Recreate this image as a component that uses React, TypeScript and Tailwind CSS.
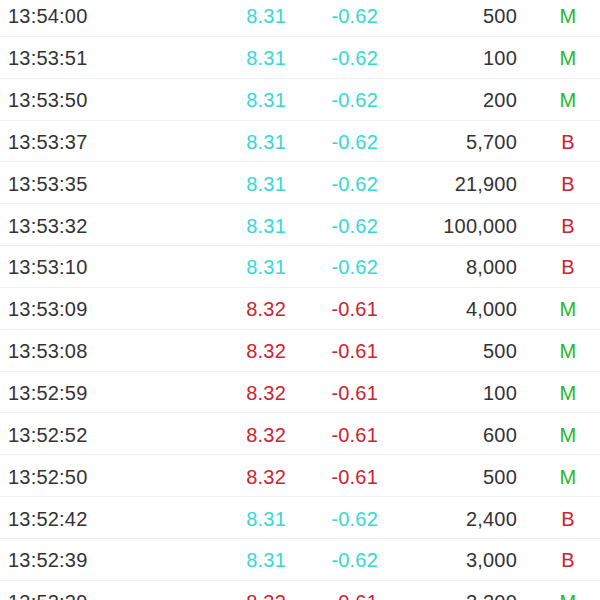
import React from "react";

type Row = { t: string; up: boolean; v: string; f: "M" | "B" };

const rows: Row[] = [
  { t: "13:54:00", up: false, v: "500", f: "M" },
  { t: "13:53:51", up: false, v: "100", f: "M" },
  { t: "13:53:50", up: false, v: "200", f: "M" },
  { t: "13:53:37", up: false, v: "5,700", f: "B" },
  { t: "13:53:35", up: false, v: "21,900", f: "B" },
  { t: "13:53:32", up: false, v: "100,000", f: "B" },
  { t: "13:53:10", up: false, v: "8,000", f: "B" },
  { t: "13:53:09", up: true, v: "4,000", f: "M" },
  { t: "13:53:08", up: true, v: "500", f: "M" },
  { t: "13:52:59", up: true, v: "100", f: "M" },
  { t: "13:52:52", up: true, v: "600", f: "M" },
  { t: "13:52:50", up: true, v: "500", f: "M" },
  { t: "13:52:42", up: false, v: "2,400", f: "B" },
  { t: "13:52:39", up: false, v: "3,000", f: "B" },
  { t: "13:52:29", up: true, v: "2,200", f: "M" },
];

export default function App() {
  return (
    <div
      className="w-[600px] h-[600px] overflow-hidden bg-white"
      style={{ fontFamily: '"Liberation Sans", Arial, sans-serif' }}
    >
      <div className="-mt-[5px]">
        {rows.map((r, i) => {
          const c = r.up ? "text-[#d0212f]" : "text-[#34d9d6]";
          return (
            <div
              key={i}
              className="flex items-center h-[41.85px] border-b border-[#f0f0f0] pl-[8px] pt-[2px] text-[20px] tracking-[0.2px] text-[#333333]"
            >
              <div className="w-[200px]">{r.t}</div>
              <div className={`w-[78px] text-right ${c}`}>{r.up ? "8.32" : "8.31"}</div>
              <div className={`w-[92px] text-right ${c}`}>{r.up ? "-0.61" : "-0.62"}</div>
              <div className="w-[139px] text-right">{r.v}</div>
              <div
                className={`w-[34px] ml-[34px] text-center ${
                  r.f === "M" ? "text-[#28b82c]" : "text-[#d0212f]"
                }`}
              >
                {r.f}
              </div>
            </div>
          );
        })}
      </div>
    </div>
  );
}
